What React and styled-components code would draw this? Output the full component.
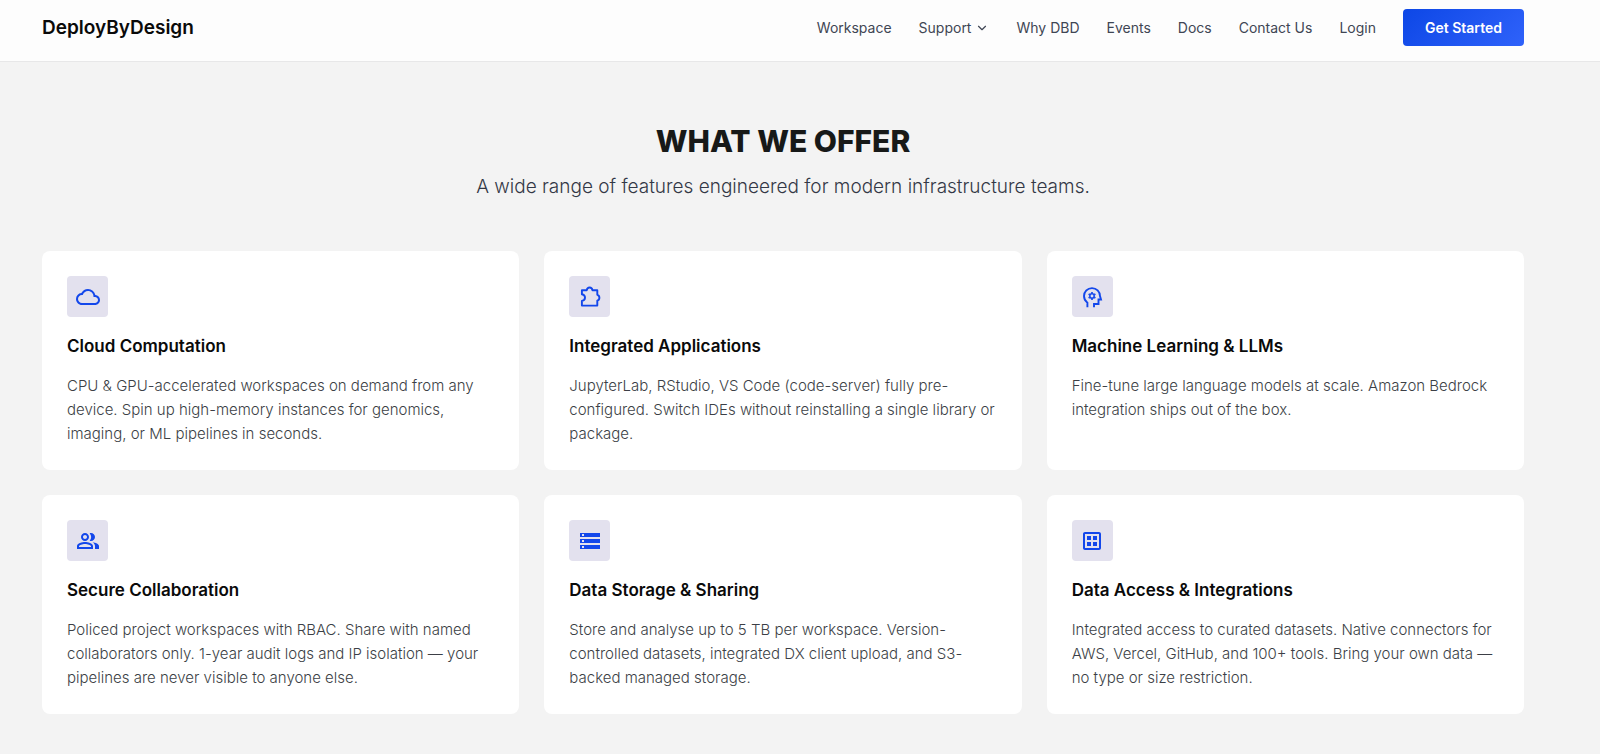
import React from "react";
import styled, { createGlobalStyle } from "styled-components";
import { ChevronDown } from "lucide-react";
import {
  MdCloudQueue,
  MdOutlinePeopleAlt,
  MdStorage,
  MdOutlineDataset,
} from "react-icons/md";

const GlobalStyle = createGlobalStyle`
  * {
    box-sizing: border-box;
  }

  body {
    margin: 0;
    background: #f3f3f3;
    font-family: Inter, "Liberation Sans", sans-serif;
    color: #0a0a0a;
  }
`;

const Header = styled.header`
  display: flex;
  align-items: center;
  justify-content: space-between;
  padding: 9px 76px 15px 42px;
  background: #fdfdfd;
  border-bottom: 1px solid #e7e7e8;
`;

const Brand = styled.a`
  font-size: 19px;
  line-height: 28px;
  font-weight: 600;
  color: #0a0a0a;
  text-decoration: none;
`;

const Nav = styled.nav`
  display: flex;
  align-items: center;
  gap: 27px;
`;

const NavLink = styled.a`
  font-size: 14px;
  line-height: 20px;
  color: #3f4654;
  text-decoration: none;

  &:hover {
    color: #1347eb;
  }
`;

const NavMenu = styled.button`
  display: flex;
  align-items: center;
  gap: 4px;
  padding: 0;
  border: none;
  background: none;
  font-family: inherit;
  font-size: 14px;
  line-height: 20px;
  color: #3f4654;
  cursor: pointer;
`;

const StartButton = styled.button`
  padding: 8px 22px;
  border: none;
  border-radius: 4px;
  background: linear-gradient(135deg, #0d47e6, #2f62fa);
  color: #ffffff;
  font-family: inherit;
  font-size: 14px;
  line-height: 21px;
  font-weight: 600;
  cursor: pointer;
`;

const Section = styled.section`
  padding: 60px 76px 40px 42px;
`;

const Intro = styled.div`
  margin-bottom: 50px;
  text-align: center;
`;

const Title = styled.h2`
  margin: 0 0 13px;
  font-size: 30px;
  line-height: 38px;
  font-weight: 800;
  color: #171918;
`;

const Subtitle = styled.p`
  margin: 0;
  font-size: 19px;
  line-height: 28px;
  font-weight: 300;
  color: #333846;
`;

const Grid = styled.div`
  display: grid;
  grid-template-columns: repeat(3, 1fr);
  gap: 25px;
`;

const Card = styled.article`
  padding: 25px 25px 24px;
  border-radius: 8px;
  background: #ffffff;
`;

const IconBox = styled.div`
  display: flex;
  align-items: center;
  justify-content: center;
  width: 41px;
  height: 41px;
  margin-bottom: 16px;
  border-radius: 4px;
  background: #e3e1ee;
  color: #1347eb;
`;

const CardTitle = styled.h3`
  margin: 0 0 15px;
  font-size: 17px;
  line-height: 26px;
  font-weight: 600;
`;

const CardText = styled.p`
  margin: 0;
  font-size: 15px;
  line-height: 24px;
  font-weight: 300;
  color: #3c3f46;
`;

const PuzzleIcon = ({ size }) => (
  <svg
    width={size}
    height={size}
    viewBox="0 0 24 24"
    fill="none"
    stroke="currentColor"
    strokeWidth="1.9"
    strokeLinejoin="round"
  >
    <path d="M3.9 20.6V16c1.8-.3 3.1-1.6 3.1-3.4S5.7 9.5 3.9 9.2V5.3h4.8C9 3.5 10 2.5 11.6 2.5s2.6 1 2.9 2.8h4.8v4.5c1.4.4 2.1 1.5 2.1 2.9s-.7 2.5-2.1 2.9v5z" />
  </svg>
);

const HeadIcon = ({ size }) => (
  <svg
    width={size}
    height={size}
    viewBox="0 0 24 24"
    fill="none"
    stroke="currentColor"
    strokeWidth="1.9"
  >
    <path d="M7.4 22.3v-4.6C5.2 16.1 4 13.8 4 11.1a8 8 0 0 1 16 0l1 3.4h-2.5V19H14v3.3" />
    <circle cx="12" cy="11" r="2.2" strokeWidth="1.5" />
    {[0, 60, 120, 180, 240, 300].map((angle) => (
      <path
        key={angle}
        d="M12 8.4V7.1"
        strokeWidth="1.7"
        transform={`rotate(${angle} 12 11)`}
      />
    ))}
  </svg>
);

const features = [
  {
    icon: MdCloudQueue,
    title: "Cloud Computation",
    text: "CPU & GPU-accelerated workspaces on demand from any device. Spin up high-memory instances for genomics, imaging, or ML pipelines in seconds.",
  },
  {
    icon: PuzzleIcon,
    title: "Integrated Applications",
    text: "JupyterLab, RStudio, VS Code (code-server) fully pre-configured. Switch IDEs without reinstalling a single library or package.",
  },
  {
    icon: HeadIcon,
    title: "Machine Learning & LLMs",
    text: "Fine-tune large language models at scale. Amazon Bedrock integration ships out of the box.",
  },
  {
    icon: MdOutlinePeopleAlt,
    title: "Secure Collaboration",
    text: "Policed project workspaces with RBAC. Share with named collaborators only. 1-year audit logs and IP isolation — your pipelines are never visible to anyone else.",
  },
  {
    icon: MdStorage,
    title: "Data Storage & Sharing",
    text: "Store and analyse up to 5 TB per workspace. Version-controlled datasets, integrated DX client upload, and S3-backed managed storage.",
  },
  {
    icon: MdOutlineDataset,
    title: "Data Access & Integrations",
    text: "Integrated access to curated datasets. Native connectors for AWS, Vercel, GitHub, and 100+ tools. Bring your own data — no type or size restriction.",
  },
];

const App = () => {
  return (
    <>
      <GlobalStyle />
      <Header>
        <Brand href="#">DeployByDesign</Brand>
        <Nav>
          <NavLink href="#workspace">Workspace</NavLink>
          <NavMenu type="button">
            Support
            <ChevronDown size={14} />
          </NavMenu>
          <NavLink href="#why">Why DBD</NavLink>
          <NavLink href="#events">Events</NavLink>
          <NavLink href="#docs">Docs</NavLink>
          <NavLink href="#contact">Contact Us</NavLink>
          <NavLink href="#login">Login</NavLink>
          <StartButton type="button">Get Started</StartButton>
        </Nav>
      </Header>

      <Section>
        <Intro>
          <Title>WHAT WE OFFER</Title>
          <Subtitle>
            A wide range of features engineered for modern infrastructure teams.
          </Subtitle>
        </Intro>
        <Grid>
          {features.map(({ icon: Icon, title, text }) => (
            <Card key={title}>
              <IconBox>
                <Icon size={24} />
              </IconBox>
              <CardTitle>{title}</CardTitle>
              <CardText>{text}</CardText>
            </Card>
          ))}
        </Grid>
      </Section>
    </>
  );
};

export default App;
